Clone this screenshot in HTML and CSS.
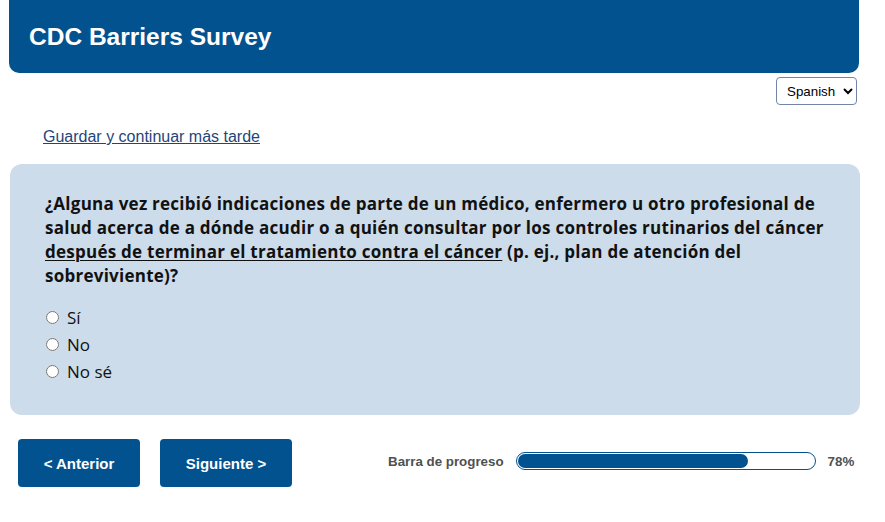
FILE: index.html
```html
<!DOCTYPE html>
<html lang="es">
<head>
<meta charset="utf-8">
<title>CDC Barriers Survey</title>
<link rel="stylesheet" href="styles.css">
</head>
<body>
<div class="page">
  <header class="banner">
    <h1 class="title">CDC Barriers Survey</h1>
  </header>
  <div class="lang-row">
    <select class="lang-select">
      <option>English</option>
      <option selected>Spanish</option>
    </select>
  </div>
  <div class="save-row">
    <a class="save-link" href="#">Guardar y continuar más tarde</a>
  </div>
  <section class="card">
    <p class="question">¿Alguna vez recibió indicaciones de parte de un médico, enfermero u otro profesional de salud acerca de a dónde acudir o a quién consultar por los controles rutinarios del cáncer <u>después de terminar el tratamiento contra el cáncer</u> (p. ej., plan de atención del sobreviviente)?</p>
    <div class="options">
      <label class="option"><input type="radio" name="q1" class="radio"><span>Sí</span></label>
      <label class="option"><input type="radio" name="q1" class="radio"><span>No</span></label>
      <label class="option"><input type="radio" name="q1" class="radio"><span>No sé</span></label>
    </div>
  </section>
  <div class="footer">
    <button class="nav-btn btn-prev">&lt; Anterior</button>
    <button class="nav-btn btn-next">Siguiente &gt;</button>
    <div class="progress">
      <span class="progress-label">Barra de progreso</span>
      <div class="progress-track"><div class="progress-fill" style="width:78%"></div></div>
      <span class="progress-value">78%</span>
    </div>
  </div>
</div>
</body>
</html>
```
FILE: styles.css
```css
html, body {
  margin: 0;
  padding: 0;
  background: #ffffff;
}

.page {
  padding-left: 9px;
  width: 851px;
  font-family: "Liberation Sans", Arial, sans-serif;
}

.banner {
  width: 850px;
  height: 73px;
  background: #02528f;
  border-radius: 0 0 10px 10px;
  display: flex;
  align-items: center;
  box-sizing: border-box;
  padding-left: 20px;
}

.title {
  margin: 0;
  color: #ffffff;
  font-size: 24.5px;
  font-weight: bold;
  line-height: 1;
  padding-top: 1px;
}

.lang-row {
  display: flex;
  justify-content: flex-end;
  padding-right: 3px;
  margin-top: 4px;
}

.lang-select {
  width: 81px;
  height: 28px;
  font-family: "Liberation Sans", Arial, sans-serif;
  font-size: 13.33px;
  color: #000;
  background: #fff;
  border: 1px solid #7484a8;
  border-radius: 4px;
  padding: 0 2px 0 6px;
}

.save-row {
  margin-top: 23px;
  padding-left: 34px;
  height: 18px;
}

.save-link {
  font-size: 16px;
  line-height: 18px;
  color: #1f4579;
  text-decoration: underline;
}

.card {
  margin-top: 18px;
  margin-left: 1px;
  width: 850px;
  box-sizing: border-box;
  background: #cddcea;
  border-radius: 12px;
  padding: 28px 25px 30px 35px;
}

.question {
  margin: 0;
  font-family: "Open Sans", "Noto Sans", sans-serif;
  font-weight: bold;
  font-size: 17px;
  letter-spacing: 0.25px;
  line-height: 24px;
  color: #111111;
}

.question u {
  text-decoration-thickness: 1px;
  text-underline-offset: 2px;
}

.options {
  margin-top: 16px;
  display: flex;
  flex-direction: column;
}

.option {
  display: flex;
  align-items: center;
  height: 27px;
  font-family: "Open Sans", "Noto Sans", sans-serif;
  font-size: 17px;
  color: #111111;
}

.radio {
  margin: 0 8px 0 1px;
  width: 13px;
  height: 13px;
}

.footer {
  margin-top: 24px;
  padding-left: 9px;
  display: flex;
  align-items: center;
}

.nav-btn {
  height: 48px;
  padding: 0 25px;
  background: #02528f;
  color: #ffffff;
  border: none;
  border-radius: 4px;
  font-family: "Liberation Sans", Arial, sans-serif;
  font-size: 15px;
  font-weight: bold;
}

.btn-prev {
  width: 122px;
}

.btn-next {
  width: 132px;
  margin-left: 20px;
}

.progress {
  margin-left: 96px;
  display: flex;
  align-items: center;
  gap: 12px;
  margin-top: -4px;
}

.progress-label,
.progress-value {
  font-size: 13.33px;
  font-weight: bold;
  color: #505050;
}

.progress-track {
  width: 300px;
  height: 18px;
  box-sizing: border-box;
  border: 1px solid #02528f;
  border-radius: 9px;
  padding: 1px;
  background: #ffffff;
}

.progress-fill {
  height: 100%;
  background: #02528f;
  border-radius: 7px;
}
```
